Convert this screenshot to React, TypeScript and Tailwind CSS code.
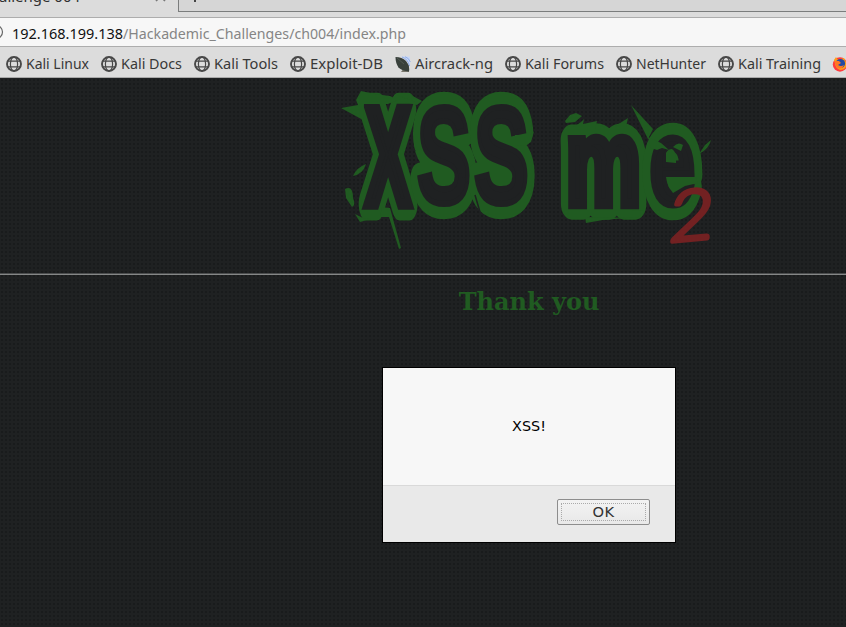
import React from "react";

const ui = "font-['Noto_Sans','Open_Sans',sans-serif]";

function Globe() {
  return (
    <svg className="h-4 w-4 shrink-0" viewBox="0 0 16 16" fill="none" stroke="#484848">
      <circle cx="8" cy="8" r="7" strokeWidth="1.9" />
      <ellipse cx="8" cy="8" rx="3.6" ry="7" strokeWidth="1.2" />
      <path d="M2 5.2H14M2 10.8H14" strokeWidth="1.2" />
    </svg>
  );
}

function Dish() {
  return (
    <svg className="h-4 w-4 shrink-0" viewBox="0 0 16 16">
      <path d="M6 .5H15V11Q13 4 6 .5Z" fill="#c9d8f5" />
      <path d="M7 1Q13 3 14.5 10M10 .7Q14 2 15.3 6" fill="none" stroke="#8eace8" strokeWidth="1" />
      <path d="M9 12L14 9V16H6Z" fill="#77756b" />
      <path d="M.5 1Q7 1 11 5Q15 10 14 15.5Q7 15 3.5 11.5Q.5 7 .5 1Z" fill="#38403b" />
      <path d="M2 2L9 8" stroke="#59635b" strokeWidth=".7" />
    </svg>
  );
}

function Firefox() {
  return (
    <svg className="h-4 w-4 shrink-0" viewBox="0 0 16 16">
      <circle cx="8" cy="8.5" r="7.2" fill="#ff3b3d" />
      <path d="M2 4L4 1L6 4L12 2L15 8Q14 14 8 14Q3 12 3 7Z" fill="#ff9e18" />
      <circle cx="8.5" cy="7.5" r="4.6" fill="#234ba5" />
      <path d="M3 5L7 5L9 7L6 9Q9 11 12 9Q10 14 6 12Q3 10 3 5Z" fill="#ff7524" />
    </svg>
  );
}

const bookmarks = [
  { label: "Kali Linux", w: "w-[95px]", tw: 63 },
  { label: "Kali Docs", w: "w-[93px]", tw: 61 },
  { label: "Kali Tools", w: "w-[96px]", tw: 64 },
  { label: "Exploit-DB", w: "w-[105px]", tw: 73 },
  { label: "Aircrack-ng", w: "w-[110px]", tw: 78 },
  { label: "Kali Forums", w: "w-[111px]", tw: 79 },
  { label: "NetHunter", w: "w-[102px]", tw: 70 },
  { label: "Kali Training", w: "w-[114px]", tw: 83 },
];

const glyphs = [
  { ch: "X", x: 31, y: 118.5, sx: 0.48, size: 138, inner: 9, outer: 26 },
  { ch: "S", x: 82, y: 118, sx: 0.59, size: 137, inner: 5, outer: 25 },
  { ch: "S", x: 139, y: 118, sx: 0.6, size: 137, inner: 5, outer: 25 },
  { ch: "m", x: 231, y: 119, sx: 0.7, size: 120, inner: 9, outer: 27 },
  { ch: "e", x: 314.5, y: 119, sx: 0.67, size: 122, inner: 6, outer: 26 },
];

function Lettering({ layer, color }: { layer: "inner" | "outer"; color: string }) {
  return (
    <g fill={color} stroke={color} strokeLinejoin={layer === "inner" ? "miter" : "round"}>
      {glyphs.map((g, i) => (
        <text
          key={i}
          transform={`translate(${g.x} ${g.y}) scale(${g.sx} 1)`}
          fontSize={g.size}
          strokeWidth={g[layer]}
          fontWeight="700"
          fontFamily="Liberation Sans, Arial, sans-serif"
          vectorEffect="non-scaling-stroke"
        >
          {g.ch}
        </text>
      ))}
    </g>
  );
}

function Logo() {
  return (
    <svg className="ml-[335px] block h-[170px] w-[390px] shrink-0 overflow-visible" viewBox="0 0 390 170">
      <Lettering layer="outer" color="#205b21" />
      <Lettering layer="inner" color="#1f2122" />
      <g fill="#205b21">
        <path d="M6 23L23 20L21 15L26 6L40 9L55 11L63 15L53 19L29 19L28 35Z" />
        <path d="M62 10L76 10L87 16L82 20L70 17L80 17Z" />
        <path d="M18 91Q21 83 31 79Q28 89 18 91ZM10 104Q18 100 18 113Q21 120 17 122L11 113ZM20 129L28 133L36 134L25 137Z" />
        <path d="M47 122L55 123L66 163L64 164L54 132L45 132Z" />
        <path d="M180 50L195 50L199 46L196 57L188 61L180 60Z" />
        <path d="M230 36L235 30L241 28L247 31L240 37L231 38ZM236 44L246 37L249 34L248 39L262 36L260 44ZM279 42L293 33L291 42Z" />
        <path d="M296 20L318 44L313 54L309 46ZM313 52L326 58L334 65L327 63L322 65L316 63ZM364 69L370 60L376 55Q374 64 364 69Z" />
        <path d="M331 77V68Q333 64 337 64Q342 67 341 78ZM338 62Q343 56 348 60L346 66ZM331 92L361 92L363 98L350 101L338 108Q332 101 331 92Z" />
        <path d="M250 132L304 133L296 126L309 125L303 132L268 135L251 138Z" />
      </g>
      <path d="M122 84L132 97M140 110L145 127M76 61L80 66" stroke="#1f2122" strokeWidth="1.5" />
      <text
        transform="translate(333 157) rotate(-5) skewX(-9) scale(1.1 1)"
        fontSize="70"
        fontFamily="Lato, sans-serif"
        fontWeight="300"
        fill="#722122"
        stroke="#722122"
        strokeWidth="4"
        strokeLinejoin="round"
      >
        2
      </text>
    </svg>
  );
}

export default function App() {
  return (
    <div className={`flex h-[627px] w-[846px] flex-col overflow-hidden bg-[#dcdcdc] ${ui}`}>
      <div className="flex h-3 shrink-0">
        <svg className="h-3 w-[178px] shrink-0" viewBox="0 0 178 12">
          <text x="-1" y="1.5" fontSize="15" textLength="81" lengthAdjust="spacingAndGlyphs" fill="#303030">allenge 004</text>
          <path d="M156 1L159 -2M165 1L162 -2" stroke="#777" strokeWidth="1.6" />
        </svg>
        <div className="h-3 flex-1 border-b border-l border-[#7b7d7d] bg-[#d6d6d6] pl-[15px]">
          <div className="h-[2px] w-[2px] bg-[#444]" />
        </div>
      </div>
      <div className="mt-[5px] flex h-[30px] shrink-0 items-center border-y border-[#adadad] bg-[#f7f7f7]">
        <svg className="h-[14px] w-3 shrink-0" viewBox="0 0 12 14">
          <circle cx="-4" cy="7" r="6.5" fill="none" stroke="#666" strokeWidth="1.2" />
        </svg>
        <svg className="h-7 w-[420px] overflow-visible" viewBox="0 0 420 28" fontSize="15.2">
          <text x="0" y="20.5" textLength="111" lengthAdjust="spacingAndGlyphs" fill="#111">192.168.199.138</text>
          <text x="111" y="20.5" textLength="283" lengthAdjust="spacingAndGlyphs" fill="#858585">/Hackademic_Challenges/ch004/index.php</text>
        </svg>
      </div>
      <div className="flex h-[31px] shrink-0 items-center border-b border-[#a9a9a9] pl-[6px] pt-[3px]">
        {bookmarks.map((b) => (
          <div key={b.label} className={`flex shrink-0 items-center gap-1 ${b.w}`}>
            {b.label === "Aircrack-ng" ? <Dish /> : <Globe />}
            <svg className="h-6 flex-1 overflow-visible" fontSize="15.2" fill="#383838">
              <text x="0" y="17" textLength={b.tw} lengthAdjust="spacingAndGlyphs">{b.label}</text>
            </svg>
          </div>
        ))}
        <Firefox />
      </div>
      <main className="flex flex-1 flex-col bg-[#1f2122] bg-[radial-gradient(circle,#191b1c_1px,transparent_1px)] bg-[size:4px_4px] pt-[7px]">
        <Logo />
        <div className="mt-[18px] h-[2px] shrink-0 border-t border-[#4b4d4e] bg-[#858787]" />
        <h1 className="mt-[13px] w-[1058px] shrink-0 text-center font-['DejaVu_Serif',serif] text-[24px] font-bold leading-[28px] text-[#205b21]">
          Thank you
        </h1>
        <div className="ml-[382px] mt-[51px] flex h-[176px] w-[294px] shrink-0 flex-col border border-black bg-[#f7f7f7] font-['DejaVu_Sans',sans-serif]">
          <div className="flex h-[117px] items-center justify-center text-[14.4px] text-black">XSS!</div>
          <div className="flex flex-1 justify-end border-t border-[#d9d9d9] bg-[#e9e9e9] pr-[25px] pt-[13px]">
            <button className="h-[26px] w-[93px] rounded-[2px] border border-[#8d8d8d] bg-gradient-to-b from-[#f3f3f3] to-[#e8e8e8] p-[3px] text-[14.67px] tracking-[0.5px] text-[#333]">
              <span className="flex h-full items-center justify-center border border-dotted border-[#aaa]">OK</span>
            </button>
          </div>
        </div>
      </main>
    </div>
  );
}
